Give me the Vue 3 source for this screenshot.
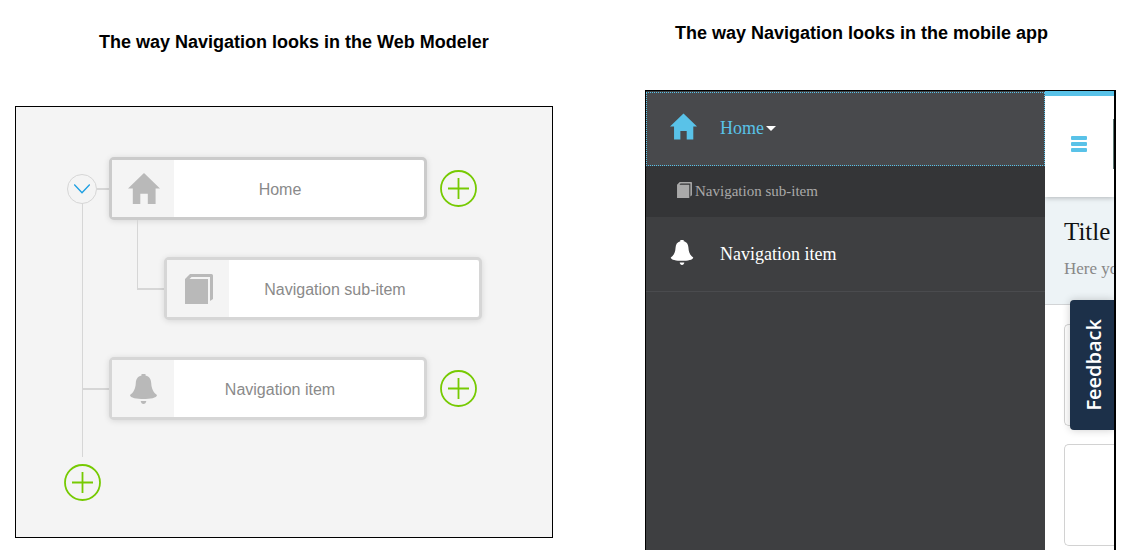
<script setup>
const nodes = [
  { label: 'Home', icon: 'home', active: true, open: true, children: [{ label: 'Navigation sub-item', icon: 'book' }] },
  { label: 'Navigation item', icon: 'bell', children: [] },
]

const shapes = {
  home: {
    box: '0 0 32 31',
    paths: ['M16 0L32 15.6H27.6V31H19.8V20.8H12.3V31H4.8V15.6H0Z'],
  },
  book: {
    box: '0 0 28 30',
    paths: ['M0 5L5 0H26.5Q28 0 28 1.5V25L25 27V3H6.5L4.5 5H23V30H0Z'],
  },
  bell: {
    box: '0 0 27 30',
    paths: [
      'M11.5 0H15.5V1.4C19.5 2.3 21 5.4 21.2 9C21.5 15 23.5 18.5 27 21C27 24 20 25 13.5 25S0 24 0 21C3.5 18.5 5.5 15 5.8 9C6 5.4 7.5 2.3 11.5 1.4Z',
      'M10.7 27H16.3C16 29 15 30 13.5 30S11 29 10.7 27Z',
    ],
  },
}
</script>

<template>
  <main class="page">
    <section class="modeler">
      <h2 class="heading">The way Navigation looks in the Web Modeler</h2>
      <div class="canvas">
        <ul class="tree">
          <li v-for="node in nodes" :key="node.label" class="branch">
            <div class="row">
              <div class="lead">
                <button v-if="node.open" class="toggle" type="button" aria-label="Collapse Home">
                  <svg viewBox="0 0 16 10" width="16" height="10"><path d="M.2 .5L8 8.8L15.8 .5" fill="none" stroke="#1d9fe2" stroke-width="1.4" /></svg>
                </button>
                <span class="link"></span>
              </div>
              <div class="node" :class="{ active: node.active }">
                <span class="node-icon">
                  <svg :class="node.icon" :viewBox="shapes[node.icon].box"><path v-for="d in shapes[node.icon].paths" :key="d" :d="d" /></svg>
                </span>
                <span class="node-label">{{ node.label }}</span>
              </div>
              <button class="add" type="button" :aria-label="'Add below ' + node.label">
                <svg viewBox="0 0 37 37" width="37" height="37"><circle cx="18.5" cy="18.5" r="17.5" /><path d="M8 18.5H29M18.5 8V29" /></svg>
              </button>
            </div>
            <ul v-if="node.children.length" class="children">
              <li v-for="child in node.children" :key="child.label" class="child">
                <span class="elbow"></span>
                <div class="node">
                  <span class="node-icon">
                    <svg :class="child.icon" :viewBox="shapes[child.icon].box"><path v-for="d in shapes[child.icon].paths" :key="d" :d="d" /></svg>
                  </span>
                  <span class="node-label">{{ child.label }}</span>
                </div>
              </li>
            </ul>
          </li>
        </ul>
        <button class="add" type="button" aria-label="Add navigation item">
          <svg viewBox="0 0 37 37" width="37" height="37"><circle cx="18.5" cy="18.5" r="17.5" /><path d="M8 18.5H29M18.5 8V29" /></svg>
        </button>
      </div>
    </section>

    <section class="mobile">
      <h2 class="heading">The way Navigation looks in the mobile app</h2>
      <div class="phone">
        <nav class="drawer">
          <a class="entry current" href="#home">
            <svg class="home" :viewBox="shapes.home.box"><path :d="shapes.home.paths[0]" /></svg>
            <span>Home</span><i class="caret"></i>
          </a>
          <a class="subentry" href="#sub">
            <svg class="book" :viewBox="shapes.book.box"><path :d="shapes.book.paths[0]" /></svg>
            <span>Navigation sub-item</span>
          </a>
          <a class="entry" href="#item">
            <svg class="bell" :viewBox="shapes.bell.box"><path v-for="d in shapes.bell.paths" :key="d" :d="d" /></svg>
            <span>Navigation item</span>
          </a>
        </nav>
        <div class="screen">
          <header class="topbar">
            <button class="menu" type="button" aria-label="Menu"><i></i><i></i><i></i></button>
            <span class="picture"></span>
          </header>
          <div class="intro">
            <h3>Title</h3>
            <p>Here you</p>
          </div>
          <div class="cards">
            <div class="card"></div>
            <div class="card"></div>
          </div>
          <button class="feedback" type="button"><span>Feedback</span></button>
        </div>
      </div>
    </section>
  </main>
</template>

<style>
body {
  margin: 0;
  background: #fff;
}
</style>

<style scoped>
* {
  box-sizing: border-box;
}
ul {
  list-style: none;
  margin: 0;
  padding: 0;
}
button {
  margin: 0;
  padding: 0;
  border: 0;
  background: none;
}
svg {
  display: block;
}
.page {
  display: grid;
  grid-template-columns: 538fr 471fr;
  column-gap: 92px;
  min-height: 100vh;
  padding: 0 16px 0 15px;
  font-family: "Liberation Sans", Arial, sans-serif;
}
.heading {
  margin: 0;
  font-size: 18px;
  line-height: 20px;
  font-weight: 700;
  color: #000;
  white-space: nowrap;
}
.modeler .heading {
  padding: 32px 0 54px 84px;
}
.mobile .heading {
  padding: 23px 0 47px 30px;
}

.canvas {
  border: 1px solid #000;
  background: #f4f4f4;
  padding: 50px 0 36px 48px;
}
.tree {
  position: relative;
  display: flex;
  flex-direction: column;
  gap: 37px;
  padding-bottom: 44px;
}
.tree::before {
  content: "";
  position: absolute;
  left: 18px;
  top: 46px;
  bottom: 7px;
  width: 1px;
  background: #d6d6d6;
}
.row {
  display: flex;
  align-items: center;
}
.lead {
  display: flex;
  align-items: center;
  width: 45px;
  padding-left: 3px;
}
.branch:not(:first-child) .lead {
  padding-left: 18px;
}
.toggle {
  display: grid;
  place-items: center;
  width: 30px;
  height: 30px;
  border: 1px solid #d6d6d6;
  border-radius: 50%;
}
.link {
  flex: 1;
  height: 2px;
  background: #d6d6d6;
}
.node {
  display: flex;
  width: 318px;
  height: 63px;
  border: 3px solid #d6d6d6;
  border-radius: 5px;
  background: #fff;
  box-shadow: 0 1px 6px rgba(0, 0, 0, 0.12);
}
.node.active {
  border-color: #cbcbcb;
}
.node-icon {
  display: grid;
  place-items: center;
  width: 62px;
  padding-left: 1px;
  background: #f4f4f4;
  fill: #b9b9b9;
}
.node-icon .home {
  width: 32px;
  height: 31px;
}
.node-icon .book {
  width: 28px;
  height: 30px;
}
.node-icon .bell {
  width: 27px;
  height: 30px;
}
.node-label {
  flex: 1;
  padding-right: 38px;
  font-size: 16px;
  line-height: 60px;
  text-align: center;
  color: #8a8a8a;
}
.add svg {
  fill: none;
  stroke: #76ca02;
  stroke-width: 1.8;
}
.row .add {
  margin-left: 13px;
}
.canvas > .add {
  display: block;
}
.children {
  padding-left: 73px;
}
.child {
  display: flex;
  padding-top: 37px;
}
.elbow {
  width: 27px;
  height: 70px;
  margin-top: -37px;
  border-left: 1px solid #d6d6d6;
  border-bottom: 2px solid #d6d6d6;
}

.mobile {
  display: flex;
  flex-direction: column;
}
.phone {
  flex: 1;
  display: grid;
  grid-template-columns: 1fr 69px;
  border: solid #000;
  border-width: 1px 2px 0 1px;
  font-family: "Liberation Serif", "Times New Roman", serif;
}
.drawer {
  padding-top: 1px;
  background: #3e3f41;
}
.entry {
  display: flex;
  align-items: center;
  height: 75px;
  padding-left: 24px;
  border-bottom: 1px solid #4a4b4e;
  font-size: 18px;
  color: #fff;
  fill: #fff;
  text-decoration: none;
}
.entry svg {
  margin-right: 23px;
  margin-bottom: 4px;
}
.entry .home {
  width: 27px;
  height: 27px;
}
.entry .bell {
  width: 24px;
  height: 25px;
  margin-right: 26px;
}
.entry.current {
  height: 74px;
  padding-bottom: 2px;
  background: #48494c;
  border: 0;
  color: #59c2e8;
  fill: #59c2e8;
  outline: 1px dotted #59c2e8;
  outline-offset: -1px;
}
.caret {
  margin-left: 2px;
  border: 5px solid transparent;
  border-top-color: #fff;
  border-bottom: 0;
}
.subentry {
  display: flex;
  align-items: center;
  gap: 3px;
  height: 51px;
  padding-left: 31px;
  background: #343537;
  font-size: 15px;
  color: #a9a9a9;
  fill: #a9a9a9;
  text-decoration: none;
}
.subentry .book {
  width: 15px;
  height: 16px;
  margin-bottom: 4px;
}
.screen {
  position: relative;
  overflow: hidden;
  background: #fff;
}
.topbar {
  position: relative;
  display: flex;
  align-items: center;
  justify-content: space-between;
  height: 106px;
  border-top: 5px solid #59c2e8;
  padding: 0 0 5px 26px;
  background: #fff;
  box-shadow: 0 1px 5px rgba(0, 0, 0, 0.25);
}
.menu {
  display: grid;
  gap: 2px;
}
.menu i {
  width: 16px;
  height: 4px;
  border-radius: 1px;
  background: #59c2e8;
}
.picture {
  width: 1px;
  height: 50px;
  background: #5f7a76;
}
.intro {
  height: 108px;
  padding: 20px 0 0 19px;
  border-bottom: 1px solid #d2d4d6;
  background: #edf3f6;
  white-space: nowrap;
}
.intro h3 {
  margin: 0;
  font-size: 25px;
  line-height: 30px;
  font-weight: 400;
  color: #111;
}
.intro p {
  margin: 12px 0 0;
  font-size: 17px;
  line-height: 20px;
  color: #888;
}
.cards {
  display: grid;
  gap: 18px;
  padding: 19px 0 0 19px;
}
.card {
  height: 102px;
  border: 1px solid #d2d2d2;
  border-right: 0;
  border-radius: 5px 0 0 5px;
}
.feedback {
  position: absolute;
  right: 0;
  top: 209px;
  display: grid;
  place-items: center;
  width: 44px;
  height: 130px;
  padding-left: 3px;
  border-radius: 4px 0 0 4px;
  background: #1c3049;
  box-shadow: 0 0 8px rgba(0, 0, 0, 0.2);
  color: #fff;
  font: 600 20px/28px "Open Sans", "Noto Sans", sans-serif;
}
.feedback span {
  writing-mode: vertical-rl;
  transform: rotate(180deg);
}
</style>
